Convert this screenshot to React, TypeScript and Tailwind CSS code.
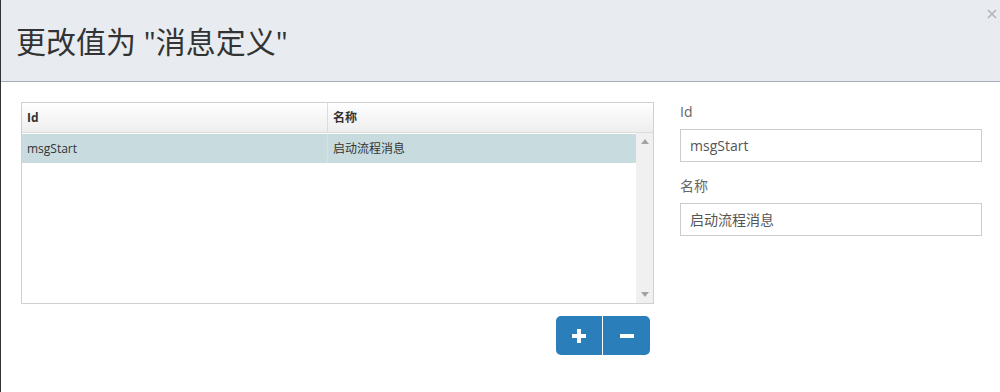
import React from 'react';

const font = { fontFamily: '"Open Sans", "Noto Sans CJK SC", sans-serif' };

const rows = [{ id: 'msgStart', name: '启动流程消息' }];

function Field({ label, value }: { label: string; value: string }) {
  return (
    <div className="mb-[14px]">
      <label className="block text-[14px] leading-[20px] text-[#666] mb-[7px]">{label}</label>
      <div className="h-[33px] border border-[#ccc] bg-white px-[9px] flex items-center text-[14px] text-[#555]">
        {value}
      </div>
    </div>
  );
}

export default function App() {
  return (
    <div className="w-[1000px] h-[392px] bg-white border-l border-[#333] flex flex-col" style={font}>
      {/* Header */}
      <div className="relative h-[82px] shrink-0 bg-[#e8ecf0] border-b border-[#a3acb7] flex items-center pl-[15px]">
        <h1 className="text-[30px] text-[#333] leading-none mt-[2px]">更改值为 "消息定义"</h1>
        <button className="absolute top-[9px] right-[3px]">
          <svg width="10" height="10" viewBox="0 0 10 10">
            <path d="M1 1 L9 9 M9 1 L1 9" stroke="#b4b4b4" strokeWidth="1.6" />
          </svg>
        </button>
      </div>

      {/* Body */}
      <div className="flex pl-[20px] pt-[20px]">
        <div className="w-[633px] flex flex-col">
          <div className="h-[202px] border border-[#d0d0d0] flex flex-col text-[12px] text-[#333]">
            <div className="h-[30px] shrink-0 flex bg-gradient-to-b from-white to-[#eeeeee] border-b border-[#dcdcdc] font-bold">
              <div className="w-[306px] border-r border-[#dcdcdc] px-[5px] flex items-center">Id</div>
              <div className="flex-1 px-[5px] flex items-center">名称</div>
            </div>
            <div className="flex flex-1">
              <div className="flex-1 pt-[1px]">
                {rows.map((r) => (
                  <div key={r.id} className="h-[29px] flex bg-[#c8dce0]">
                    <div className="w-[306px] border-r border-[#d6e2e4] px-[5px] flex items-center">{r.id}</div>
                    <div className="flex-1 px-[5px] flex items-center">{r.name}</div>
                  </div>
                ))}
              </div>
              <div className="w-[17px] bg-[#f0f0f0] flex flex-col justify-between items-center py-[6px]">
                <svg width="8" height="5" viewBox="0 0 8 5"><path d="M0 5 L4 0 L8 5 Z" fill="#a3a3a3" /></svg>
                <svg width="8" height="5" viewBox="0 0 8 5"><path d="M0 0 L8 0 L4 5 Z" fill="#a3a3a3" /></svg>
              </div>
            </div>
          </div>
          <div className="flex justify-end mt-[12px] mr-[4px]">
            <div className="flex rounded-[5px] overflow-hidden">
              <button className="w-[47px] h-[39px] bg-[#2a7fbb] flex items-center justify-center border-r border-white">
                <svg width="14" height="14" viewBox="0 0 14 14"><path d="M5 0h4v5h5v4H9v5H5V9H0V5h5z" fill="white" /></svg>
              </button>
              <button className="w-[47px] h-[39px] bg-[#2a7fbb] flex items-center justify-center">
                <svg width="14" height="4" viewBox="0 0 14 4"><rect width="14" height="4" fill="white" /></svg>
              </button>
            </div>
          </div>
        </div>

        <div className="w-[302px] ml-[26px]">
          <Field label="Id" value="msgStart" />
          <Field label="名称" value="启动流程消息" />
        </div>
      </div>
    </div>
  );
}
